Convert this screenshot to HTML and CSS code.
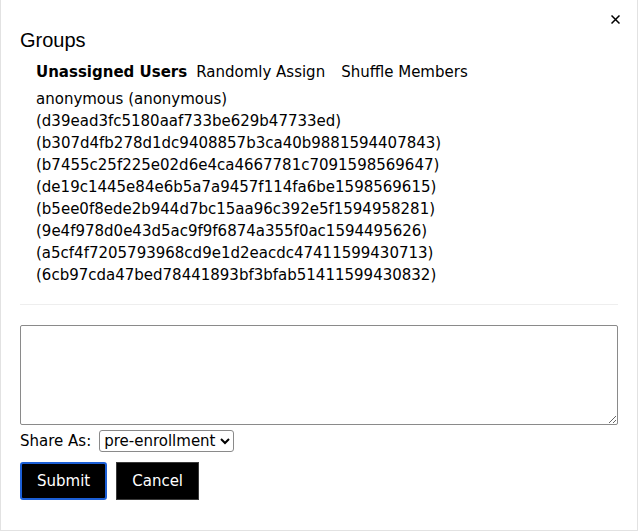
FILE: index.html
```html
<!DOCTYPE html>
<html lang="en">
<head>
  <meta charset="UTF-8" />
  <meta name="viewport" content="width=device-width, initial-scale=1.0" />
  <title>Groups</title>
  <link rel="stylesheet" href="styles.css">
</head>
<body>
  <div class="modal">
    <div class="modal-header">
      <h2 class="modal-title">Groups</h2>
      <button class="close-button" aria-label="Close">
        <svg width="9" height="9" viewBox="0 0 9 9">
          <path d="M0.5 0.5 L8.5 8.5 M8.5 0.5 L0.5 8.5" stroke="#000" stroke-width="1.5" />
        </svg>
      </button>
    </div>

    <div class="groups">
      <div class="tabs">
        <span class="tab active">Unassigned Users</span>
        <span class="tab">Randomly Assign</span>
        <span class="tab">Shuffle Members</span>
      </div>
      <ul class="user-list">
        <li>anonymous (anonymous)</li>
        <li>(d39ead3fc5180aaf733be629b47733ed)</li>
        <li>(b307d4fb278d1dc9408857b3ca40b9881594407843)</li>
        <li>(b7455c25f225e02d6e4ca4667781c7091598569647)</li>
        <li>(de19c1445e84e6b5a7a9457f114fa6be1598569615)</li>
        <li>(b5ee0f8ede2b944d7bc15aa96c392e5f1594958281)</li>
        <li>(9e4f978d0e43d5ac9f9f6874a355f0ac1594495626)</li>
        <li>(a5cf4f7205793968cd9e1d2eacdc47411599430713)</li>
        <li>(6cb97cda47bed78441893bf3bfab51411599430832)</li>
      </ul>
    </div>

    <hr class="divider">

    <textarea class="message"></textarea>

    <div class="share-row">
      <label for="shareAs">Share As:</label>
      <select id="shareAs" class="share-select">
        <option>pre-enrollment</option>
        <option>post-enrollment</option>
      </select>
    </div>

    <div class="actions">
      <button class="btn btn-focus">Submit</button>
      <button class="btn">Cancel</button>
    </div>
  </div>
</body>
</html>
```

FILE: styles.css
```css
* {
  box-sizing: border-box;
  margin: 0;
  padding: 0;
}

body {
  background: #ffffff;
  color: #000;
  font-family: 'DejaVu Sans', Verdana, sans-serif;
  font-size: 15px;
  line-height: 22px;
}

.modal {
  width: 638px;
  height: 531px;
  border: 1px solid #e2e2e2;
  border-top: none;
  background: #fff;
  padding: 0 19px 0 19px;
}

.modal-header {
  display: flex;
  justify-content: space-between;
  align-items: flex-start;
}

.modal-title {
  margin-top: 28px;
  font-family: 'Liberation Sans', Arial, sans-serif;
  font-size: 20px;
  font-weight: normal;
  line-height: 24px;
}

.close-button {
  margin-top: 15px;
  margin-right: -2px;
  background: none;
  border: none;
  width: 9px;
  height: 9px;
  line-height: 0;
  cursor: pointer;
}

.groups {
  padding-left: 16px;
  margin-top: 9px;
}

.tabs {
  display: flex;
}

.tab {
  margin-right: 9px;
  cursor: pointer;
}

.tab + .tab {
  margin-right: 16px;
}

.tab.active {
  font-weight: bold;
}

.user-list {
  list-style: none;
  margin-top: 5px;
}

.divider {
  border: none;
  border-top: 1px solid #eeeeee;
  margin-top: 18px;
}

.message {
  display: block;
  width: 598px;
  height: 100px;
  margin-top: 20px;
  border: 1px solid #8a8a8a;
  border-radius: 2px;
  font-family: 'DejaVu Sans', Verdana, sans-serif;
  font-size: 15px;
}

.share-row {
  display: flex;
  align-items: center;
  gap: 8px;
  margin-top: 5px;
  height: 22px;
}

.share-select {
  width: 135px;
  height: 22px;
  font-family: 'DejaVu Sans', Verdana, sans-serif;
  font-size: 15px;
  color: #000;
  background: #fff;
  border: 1px solid #8a8a8a;
  border-radius: 3px;
}

.actions {
  display: flex;
  gap: 9px;
  margin-top: 10px;
}

.btn {
  height: 38px;
  padding: 0 15px;
  background: #000;
  color: #fff;
  border: 1px solid #3a3a3a;
  font-family: 'DejaVu Sans', Verdana, sans-serif;
  font-size: 15px;
  cursor: pointer;
}

.btn-focus {
  border: 2px solid #1c5fd6;
  border-radius: 3px;
}
```
